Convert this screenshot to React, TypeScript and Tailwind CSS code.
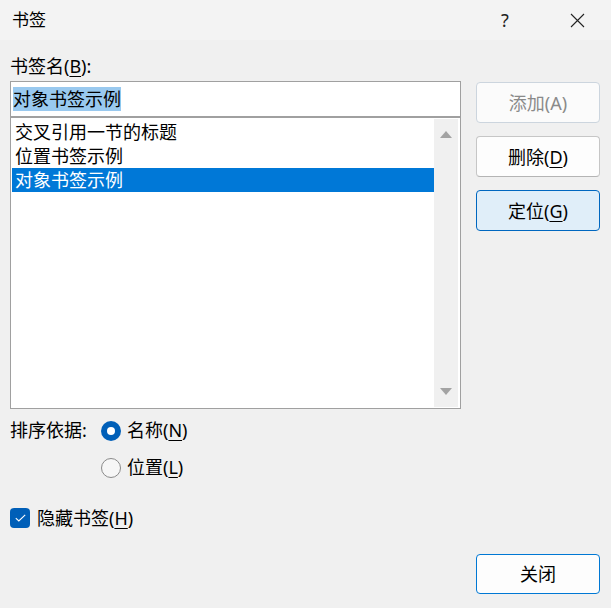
import React from 'react';

const FONT = "font-['Noto_Sans','Noto_Sans_CJK_SC',sans-serif]";

function U({ children }: { children: React.ReactNode }) {
  return <span className="underline underline-offset-[3px] decoration-1">{children}</span>;
}

function Radio({ checked }: { checked: boolean }) {
  if (checked) {
    return (
      <span className="w-[20px] h-[20px] rounded-full bg-[#005fb8] flex items-center justify-center shrink-0">
        <span className="w-[8px] h-[8px] rounded-full bg-white" />
      </span>
    );
  }
  return <span className="w-[20px] h-[20px] rounded-full border border-[#8a8a8a] bg-[#f6f6f6] shrink-0" />;
}

export default function App() {
  const items = ['交叉引用一节的标题', '位置书签示例', '对象书签示例'];
  const selected = 2;

  return (
    <div className={`w-[611px] h-[608px] bg-[#f0f0f0] flex flex-col text-black ${FONT}`}>
      {/* Title bar */}
      <div className="h-[40px] bg-[#f3f3f3] flex items-center justify-between pl-[12px] pr-[11px] shrink-0">
        <span className="text-[17px] leading-[24px]">书签</span>
        <div className="flex items-center gap-[26px]">
          <span className="w-[46px] text-center text-[18px] leading-[24px] text-[#222]">?</span>
          <span className="w-[46px] flex justify-center">
            <svg width="15" height="15" viewBox="0 0 15 15">
              <path d="M1 1L14 14M14 1L1 14" stroke="#222" strokeWidth="1.1" />
            </svg>
          </span>
        </div>
      </div>

      {/* Body */}
      <div className="flex-1 flex px-[10px] pb-[14px]">
        {/* Left column */}
        <div className="w-[451px] flex flex-col">
          <div className="mt-[13px] mb-[2px] h-[26px] text-[18px] leading-[26px]">
            书签名(<U>B</U>):
          </div>

          <div className="h-[36px] border border-[#a0a0a0] bg-white flex items-center pl-[2px]">
            <span className="bg-[#99c9ef] text-[18px] leading-[24px]">对象书签示例</span>
          </div>

          <div className="h-[292px] border border-[#a0a0a0] bg-white flex">
            <div className="flex-1 pt-[2px] pl-[1px]">
              {items.map((item, i) => (
                <div
                  key={item}
                  className={`h-[24px] leading-[24px] pl-[3px] text-[18px] ${
                    i === selected ? 'bg-[#0078d7] text-white' : ''
                  }`}
                >
                  {item}
                </div>
              ))}
            </div>
            <div className="w-[24px] my-[1px] mr-[2px] bg-[#f0f0f0] flex flex-col items-center justify-between py-[12px]">
              <svg width="12" height="7" viewBox="0 0 12 7">
                <path d="M6 0L12 7H0Z" fill="#a3a3a3" />
              </svg>
              <svg width="12" height="7" viewBox="0 0 12 7">
                <path d="M0 0H12L6 7Z" fill="#a3a3a3" />
              </svg>
            </div>
          </div>

          {/* Sort options */}
          <div className="mt-[11px] flex items-center h-[21px] text-[18px]">
            <span className="w-[91px] leading-[21px]">排序依据:</span>
            <Radio checked />
            <span className="ml-[6px] leading-[21px]">
              名称(<U>N</U>)
            </span>
          </div>
          <div className="mt-[16px] flex items-center h-[21px] text-[18px] pl-[91px]">
            <Radio checked={false} />
            <span className="ml-[6px] leading-[21px]">
              位置(<U>L</U>)
            </span>
          </div>

          <div className="mt-[30px] flex items-center h-[20px] text-[18px]">
            <span className="w-[20px] h-[20px] rounded-[4px] bg-[#005fb8] flex items-center justify-center shrink-0">
              <svg width="11" height="8" viewBox="0 0 11 8">
                <path d="M0.8 4.2L3.8 7L10.2 0.8" stroke="white" strokeWidth="1.1" fill="none" />
              </svg>
            </span>
            <span className="ml-[7px] leading-[21px]">
              隐藏书签(<U>H</U>)
            </span>
          </div>
        </div>

        {/* Right column */}
        <div className="w-[124px] ml-[15px] flex flex-col pt-[42px]">
          <div className="flex flex-col gap-[13px]">
            <button className="h-[41px] rounded-[4px] border border-[#ccd5de] bg-[#fbfbfb] text-[18px] leading-[24px] text-[#8a8a8a]">
              添加(A)
            </button>
            <button className="h-[41px] rounded-[4px] border border-[#c6c6c6] border-b-[#b4b4b4] bg-[#fdfdfd] text-[18px] leading-[24px]">
              删除(<U>D</U>)
            </button>
            <button className="h-[41px] rounded-[4px] border border-[#0067c0] bg-[#e0eef9] text-[18px] leading-[24px]">
              定位(<U>G</U>)
            </button>
          </div>
          <button className="mt-auto h-[40px] rounded-[4px] border border-[#0078d4] bg-[#fdfdfd] text-[18px] leading-[24px]">
            关闭
          </button>
        </div>
      </div>
    </div>
  );
}
